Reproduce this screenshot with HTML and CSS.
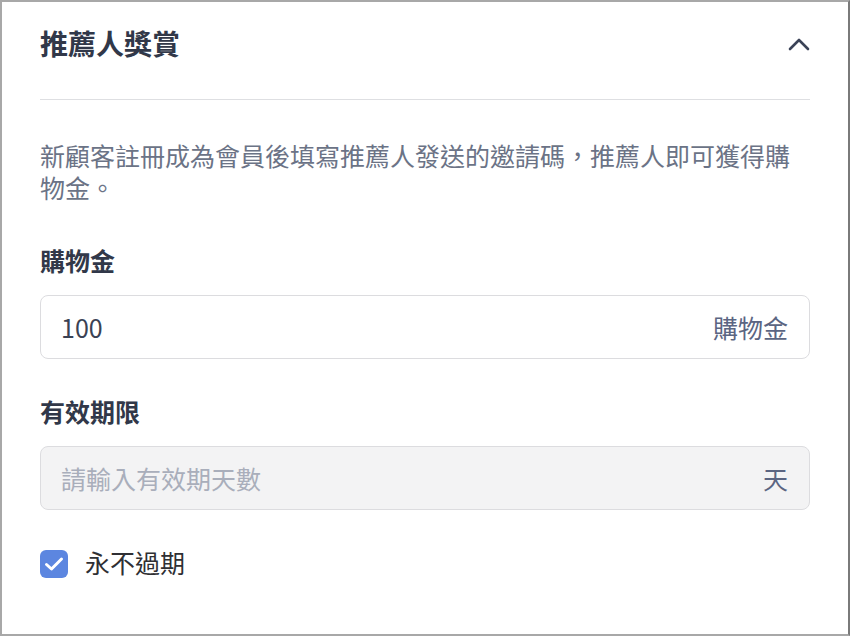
FILE: index.html
```html
<!DOCTYPE html>
<html lang="zh-Hant">
<head>
    <meta charset="UTF-8">
    <meta name="viewport" content="width=device-width, initial-scale=1.0">
    <title>推薦人獎賞</title>
    <link rel="stylesheet" href="styles.css">
</head>
<body>
    <div class="panel">
        <div class="panel-header">
            <h2>推薦人獎賞</h2>
            <svg class="chevron" width="22" height="14" viewBox="0 0 22 14">
                <path d="M2 12 L11 3 L20 12" fill="none" stroke="#3b4357" stroke-width="2.6" stroke-linecap="round" stroke-linejoin="round"/>
            </svg>
        </div>

        <p class="desc">新顧客註冊成為會員後填寫推薦人發送的邀請碼，推薦人即可獲得購物金。</p>

        <div class="field">
            <label for="credit">購物金</label>
            <div class="input-group">
                <input type="text" id="credit" value="100">
                <span class="suffix">購物金</span>
            </div>
        </div>

        <div class="field">
            <label for="days">有效期限</label>
            <div class="input-group disabled">
                <input type="text" id="days" placeholder="請輸入有效期天數" disabled>
                <span class="suffix">天</span>
            </div>
        </div>

        <div class="check-row">
            <span class="checkbox">
                <svg width="20" height="16" viewBox="0 0 20 16">
                    <path d="M2.5 8.5 L7.5 13 L17.5 3" fill="none" stroke="#fff" stroke-width="3" stroke-linecap="round" stroke-linejoin="round"/>
                </svg>
            </span>
            <span class="check-label">永不過期</span>
        </div>
    </div>
</body>
</html>
```

FILE: styles.css
```css
* {
    box-sizing: border-box;
}

body {
    margin: 0;
    font-family: "Noto Sans CJK TC", "Noto Sans", sans-serif;
    background-color: #fff;
}

.panel {
    height: 636px;
    border: 2px solid #a8a8a8;
    border-right-color: #7a7a7a;
    padding: 0 38px;
    background-color: #fff;
}

.panel-header {
    display: flex;
    justify-content: space-between;
    align-items: center;
    padding: 21px 0 36px;
    border-bottom: 1px solid #dedfe2;
}

.panel-header h2 {
    margin: 0;
    font-size: 28px;
    line-height: 40px;
    font-weight: 700;
    color: #313849;
}

.chevron {
    margin-top: 2px;
}

.desc {
    margin: 39px 0 0;
    font-size: 25px;
    line-height: 32px;
    color: #6b7386;
}

.field {
    margin-top: 41px;
}

.field + .field {
    margin-top: 36px;
}

.field label {
    display: block;
    font-size: 25px;
    line-height: 32px;
    font-weight: 700;
    color: #313849;
    margin-bottom: 19px;
}

.input-group {
    display: flex;
    align-items: center;
    height: 64px;
    border: 1px solid #dcdcdf;
    border-radius: 8px;
    padding: 0 21px 0 20px;
    background-color: #fff;
}

.input-group.disabled {
    background-color: #f3f3f4;
}

.input-group input {
    flex: 1;
    min-width: 0;
    border: none;
    outline: none;
    background: transparent;
    padding: 0;
    font-family: inherit;
    font-size: 25px;
    color: #3a4254;
}

.input-group input::placeholder {
    color: #a9aebb;
}

.suffix {
    font-size: 25px;
    color: #5b6582;
}

.check-row {
    display: flex;
    align-items: center;
    gap: 17px;
    margin-top: 38px;
}

.checkbox {
    display: flex;
    align-items: center;
    justify-content: center;
    width: 28px;
    height: 28px;
    border-radius: 6px;
    background-color: #5c86e0;
}

.check-label {
    font-size: 25px;
    line-height: 28px;
    padding-bottom: 4px;
    color: #2f2f33;
}
```
